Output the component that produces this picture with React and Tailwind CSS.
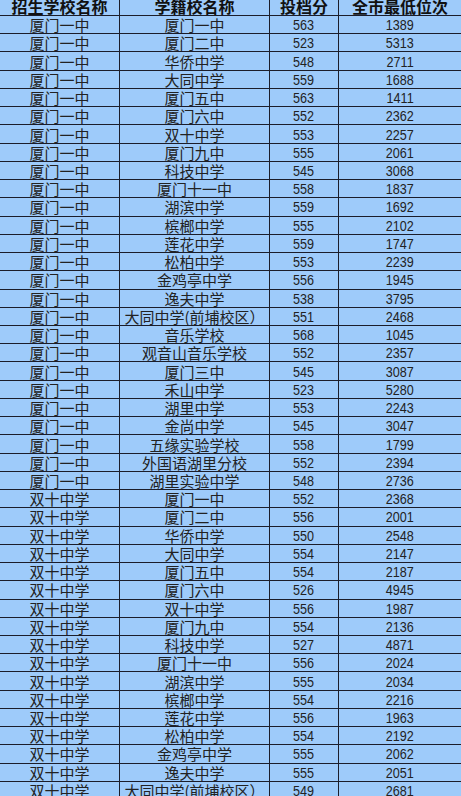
const rows = [
  ["厦门一中", "厦门一中", "563", "1389"],
  ["厦门一中", "厦门二中", "523", "5313"],
  ["厦门一中", "华侨中学", "548", "2711"],
  ["厦门一中", "大同中学", "559", "1688"],
  ["厦门一中", "厦门五中", "563", "1411"],
  ["厦门一中", "厦门六中", "552", "2362"],
  ["厦门一中", "双十中学", "553", "2257"],
  ["厦门一中", "厦门九中", "555", "2061"],
  ["厦门一中", "科技中学", "545", "3068"],
  ["厦门一中", "厦门十一中", "558", "1837"],
  ["厦门一中", "湖滨中学", "559", "1692"],
  ["厦门一中", "槟榔中学", "555", "2102"],
  ["厦门一中", "莲花中学", "559", "1747"],
  ["厦门一中", "松柏中学", "553", "2239"],
  ["厦门一中", "金鸡亭中学", "556", "1945"],
  ["厦门一中", "逸夫中学", "538", "3795"],
  ["厦门一中", "大同中学(前埔校区）", "551", "2468"],
  ["厦门一中", "音乐学校", "568", "1045"],
  ["厦门一中", "观音山音乐学校", "552", "2357"],
  ["厦门一中", "厦门三中", "545", "3087"],
  ["厦门一中", "禾山中学", "523", "5280"],
  ["厦门一中", "湖里中学", "553", "2243"],
  ["厦门一中", "金尚中学", "545", "3047"],
  ["厦门一中", "五缘实验学校", "558", "1799"],
  ["厦门一中", "外国语湖里分校", "552", "2394"],
  ["厦门一中", "湖里实验中学", "548", "2736"],
  ["双十中学", "厦门一中", "552", "2368"],
  ["双十中学", "厦门二中", "556", "2001"],
  ["双十中学", "华侨中学", "550", "2548"],
  ["双十中学", "大同中学", "554", "2147"],
  ["双十中学", "厦门五中", "554", "2187"],
  ["双十中学", "厦门六中", "526", "4945"],
  ["双十中学", "双十中学", "556", "1987"],
  ["双十中学", "厦门九中", "554", "2136"],
  ["双十中学", "科技中学", "527", "4871"],
  ["双十中学", "厦门十一中", "556", "2024"],
  ["双十中学", "湖滨中学", "555", "2034"],
  ["双十中学", "槟榔中学", "554", "2216"],
  ["双十中学", "莲花中学", "556", "1963"],
  ["双十中学", "松柏中学", "554", "2192"],
  ["双十中学", "金鸡亭中学", "555", "2062"],
  ["双十中学", "逸夫中学", "555", "2051"],
  ["双十中学", "大同中学(前埔校区）", "549", "2681"],
];

const cjk = "font-['Noto_Sans_CJK_SC',sans-serif]";
const num = "font-['Liberation_Sans','Noto_Sans_CJK_SC',sans-serif]";
const line = "border-[#1b1d2a]";

function Num({ children }) {
  return (
    <span className={`inline-block scale-x-[0.84] text-[15px] leading-none ${num}`}>
      {children}
    </span>
  );
}

export default function App() {
  return (
    <div className="h-[796px] w-[461px] overflow-hidden bg-[#9ecbfa] text-[#222]">
      <div className="-mt-[3px]">
        {/* header */}
        <div className={`grid h-[19px] grid-cols-[120px_150px_69px_122px] border-b ${line} text-[16px] font-bold leading-none text-[#111] ${cjk}`}>
          <div className={`flex items-center justify-center border-r ${line}`}>招生学校名称</div>
          <div className={`flex items-center justify-center border-r ${line}`}>学籍校名称</div>
          <div className={`flex items-center justify-center border-r ${line}`}>投档分</div>
          <div className="flex items-center justify-center">全市最低位次</div>
        </div>

        {rows.map(([school, origin, score, rank], i) => (
          <div
            key={i}
            className={`grid h-[18.24px] grid-cols-[120px_150px_69px_122px] border-b ${line} text-[15px] leading-none`}
          >
            <div className={`flex items-center justify-center border-r ${line} ${cjk}`}>{school}</div>
            <div className={`flex items-center justify-center whitespace-nowrap border-r ${line} ${cjk}`}>{origin}</div>
            <div className={`flex items-center justify-center border-r ${line}`}>
              <Num>{score}</Num>
            </div>
            <div className="flex items-center justify-center">
              <Num>{rank}</Num>
            </div>
          </div>
        ))}
      </div>
    </div>
  );
}
